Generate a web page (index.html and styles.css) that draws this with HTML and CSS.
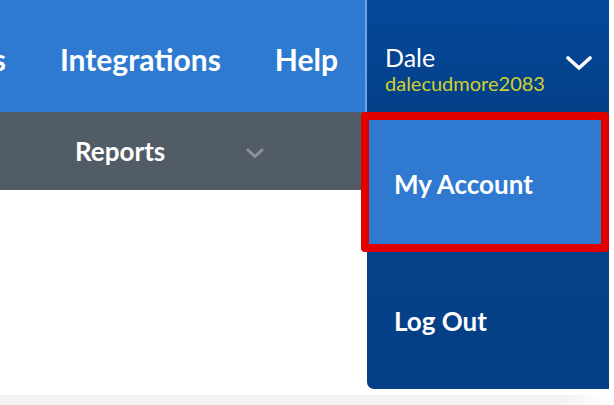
FILE: index.html
```html
<!DOCTYPE html>
<html lang="en">
<head>
<meta charset="utf-8">
<title>Account menu</title>
<link rel="stylesheet" href="styles.css">
</head>
<body>
<div class="page">
  <header class="topbar">
    <nav class="mainnav">
      <a class="navitem">Forms</a>
      <a class="navitem">Integrations</a>
      <a class="navitem">Help</a>
    </nav>
    <div class="user">
      <div class="user-text">
        <div class="user-name">Dale</div>
        <div class="user-handle">dalecudmore2083</div>
      </div>
      <svg class="user-chevron" width="26" height="14" viewBox="0 0 26 14" aria-hidden="true">
        <path d="M2 2 L13 12 L24 2" fill="none" stroke="#ffffff" stroke-width="3.6" stroke-linecap="round" stroke-linejoin="round"/>
      </svg>
    </div>
  </header>
  <div class="subbar">
    <div class="subitem">
      <span class="subitem-label">Reports</span>
      <svg class="subitem-chevron" width="18" height="11" viewBox="0 0 18 11" aria-hidden="true">
        <path d="M2 2 L9 8.5 L16 2" fill="none" stroke="#8b949e" stroke-width="3" stroke-linecap="round" stroke-linejoin="round"/>
      </svg>
    </div>
  </div>
  <main class="content"></main>
  <div class="footer-strip"></div>

  <div class="dropdown">
    <a class="menu-item menu-item-active">My Account</a>
    <a class="menu-item">Log Out</a>
  </div>
</div>
</body>
</html>
```

FILE: styles.css
```css
html, body {
  margin: 0;
  padding: 0;
  background: #ffffff;
}

.page {
  position: relative;
  width: 609px;
  height: 405px;
  overflow: hidden;
  font-family: Lato, "Open Sans", "Liberation Sans", sans-serif;
  color: #ffffff;
}

.topbar {
  display: flex;
  height: 112px;
}

.mainnav {
  width: 365px;
  flex: none;
  display: flex;
  justify-content: flex-end;
  align-items: center;
  overflow: hidden;
  background: #2e7ad1;
  border-right: 2px solid #6ea4e4;
  white-space: nowrap;
}

.navitem {
  flex: none;
  padding: 0 27px;
  font-size: 30px;
  font-weight: 700;
  color: #ffffff;
  line-height: 1;
  padding-top: 6px;
}

.user {
  flex: 1;
  display: flex;
  align-items: center;
  justify-content: space-between;
  padding: 0 17px 0 18px;
  background: linear-gradient(#04489a, #054088);
}

.user-text {
  display: flex;
  flex-direction: column;
  padding-top: 26px;
}

.user-name {
  font-size: 25px;
  line-height: 28px;
  font-weight: 400;
}

.user-handle {
  font-size: 20px;
  line-height: 24px;
  color: #d2cf2c;
}

.user-chevron {
  display: block;
  margin-top: 14px;
}

.subbar {
  height: 78px;
  background: #525c66;
  display: flex;
  align-items: center;
}

.subitem {
  display: flex;
  align-items: center;
  padding-left: 75px;
}

.subitem-label {
  font-size: 26px;
  font-weight: 700;
  line-height: 1;
}

.subitem-chevron {
  display: block;
  margin-left: 81px;
  margin-top: 4px;
}

.content {
  display: block;
  height: 205px;
  background: #ffffff;
}

.footer-strip {
  height: 10px;
  background: linear-gradient(to right, #f2f2f2 0, #f2f2f2 560px, #ffffff 609px);
}

.dropdown {
  position: absolute;
  top: 112px;
  left: 367px;
  width: 242px;
  height: 277px;
  display: flex;
  flex-direction: column;
  background: linear-gradient(#05458f, #053f85);
  border-bottom-left-radius: 7px;
}

.menu-item {
  display: flex;
  align-items: center;
  flex: 1;
  padding-left: 27px;
  font-size: 26px;
  font-weight: 700;
  color: #ffffff;
}

.menu-item-active {
  flex: none;
  margin-left: -6px;
  padding-left: 25px;
  padding-top: 4px;
  box-sizing: border-box;
  height: 140px;
  background: #2f79d0;
  border: 8px solid #e10000;
  border-radius: 4px;
}
```
